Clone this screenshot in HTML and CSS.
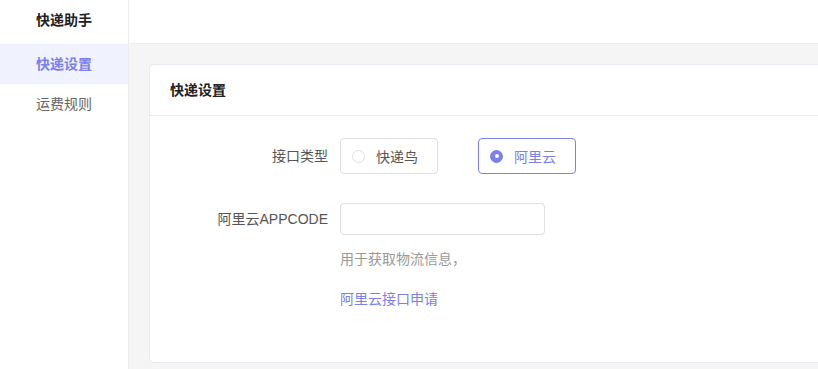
FILE: index.html
```html
<!DOCTYPE html>
<html>
<head>
  <meta charset="utf-8">
  <title>快递助手</title>
  <link rel="stylesheet" href="styles.css">
</head>
<body>
  <div id="layout">
    <div id="sidebar">
      <div id="app-title">快递助手</div>
      <div class="menu-item active">快递设置</div>
      <div class="menu-item">运费规则</div>
    </div>
    <div id="main">
      <div id="topbar"></div>
      <div id="content">
        <div class="card">
          <div class="card-header">快递设置</div>
          <div class="card-body">
            <div class="form-row">
              <div class="form-label">接口类型</div>
              <div class="radio-group">
                <div class="radio">
                  <span class="radio-dot"></span>
                  <span class="radio-text">快递鸟</span>
                </div>
                <div class="radio checked">
                  <span class="radio-dot"></span>
                  <span class="radio-text">阿里云</span>
                </div>
              </div>
            </div>
            <div class="form-row row-input">
              <div class="form-label">阿里云APPCODE</div>
              <div class="form-control">
                <input type="text" class="text-input">
                <div class="hint">用于获取物流信息，</div>
                <a class="link">阿里云接口申请</a>
              </div>
            </div>
          </div>
        </div>
      </div>
    </div>
  </div>
</body>
</html>
```

FILE: styles.css
```css
html, body {
  height: 100%;
  margin: 0;
  overflow: hidden;
  background-color: #f5f5f5;
  font-family: "Liberation Sans", "Noto Sans CJK SC", sans-serif;
  font-size: 14px;
  color: #333;
}
#layout {
  display: flex;
  height: 100%;
}
#sidebar {
  width: 128px;
  flex-shrink: 0;
  background-color: #fff;
  border-right: 1px solid #ececec;
}
#app-title {
  height: 44px;
  line-height: 40px;
  text-align: center;
  font-weight: bold;
  color: #222;
}
.menu-item {
  height: 40px;
  line-height: 40px;
  text-align: center;
  color: #666;
}
.menu-item.active {
  background-color: #f0f2fd;
  color: #7a80ec;
  font-weight: bold;
}
#main {
  flex: 1;
  min-width: 0;
  display: flex;
  flex-direction: column;
  overflow: hidden;
}
#topbar {
  height: 43px;
  background-color: #fff;
  border-bottom: 1px solid #ededed;
}
#content {
  padding: 20px 0 0 20px;
}
.card {
  background-color: #fff;
  border: 1px solid #e9eaf2;
  border-radius: 4px;
  height: 299px;
  box-sizing: border-box;
  margin-right: -40px;
}
.card-header {
  height: 50px;
  line-height: 50px;
  padding: 0 20px;
  border-bottom: 1px solid #e9eaf2;
  font-weight: bold;
  color: #222;
}
.card-body {
  padding-top: 22px;
}
.form-row {
  display: flex;
  align-items: flex-start;
}
.form-label {
  width: 178px;
  padding-right: 12px;
  text-align: right;
  color: #555;
  line-height: 36px;
}
.radio-group {
  display: flex;
  gap: 40px;
}
.radio {
  display: flex;
  align-items: center;
  height: 36px;
  width: 98px;
  box-sizing: border-box;
  padding-left: 11px;
  border: 1px solid #dcdfe6;
  border-radius: 4px;
  color: #555;
}
.radio-dot {
  width: 13px;
  height: 13px;
  box-sizing: border-box;
  border: 1px solid #dcdfe6;
  border-radius: 50%;
  margin-right: 11px;
  position: relative;
}
.radio.checked {
  border-color: #7a80ec;
  color: #7a80ec;
}
.radio.checked .radio-dot {
  background-color: #7a80ec;
  border-color: #7a80ec;
}
.radio.checked .radio-dot::after {
  content: "";
  position: absolute;
  width: 4px;
  height: 4px;
  border-radius: 50%;
  background-color: #fff;
  left: 50%;
  top: 50%;
  transform: translate(-50%, -50%);
}
.row-input {
  margin-top: 29px;
}
.row-input .form-label {
  line-height: 32px;
}
.text-input {
  display: block;
  width: 205px;
  height: 32px;
  box-sizing: border-box;
  border: 1px solid #dcdfe6;
  border-radius: 4px;
  outline: none;
  margin: 0;
  padding: 0 10px;
}
.hint {
  margin-top: 14px;
  line-height: 20px;
  color: #999;
}
.link {
  display: block;
  margin-top: 20px;
  line-height: 20px;
  color: #7a80ec;
  cursor: pointer;
}
```
